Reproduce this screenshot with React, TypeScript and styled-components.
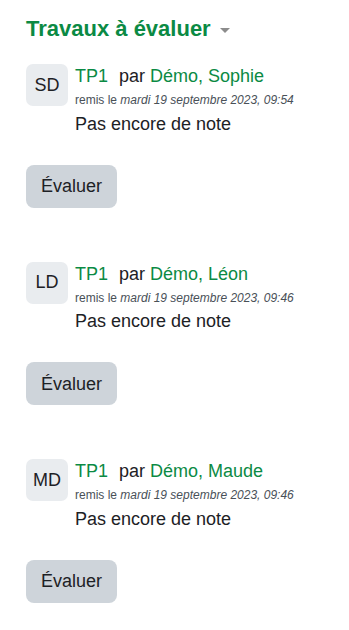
import React from "react";
import styled, { createGlobalStyle } from "styled-components";

const Global = createGlobalStyle`
  html, body { margin: 0; padding: 0; background: #ffffff; }
  body { font-family: "Liberation Sans", Arial, Helvetica, sans-serif; color: #1d2125; }
`;

const Page = styled.div`
  padding: 16px 20px 20px 26px;
`;

const Heading = styled.h3`
  margin: 0 0 22px 0;
  font-size: 22px;
  line-height: 26px;
  font-weight: 700;
  color: #0b8a44;
  display: flex;
  align-items: center;
  gap: 9px;
`;

const Caret = styled.span`
  display: inline-block;
  width: 0;
  height: 0;
  border-left: 5px solid transparent;
  border-right: 5px solid transparent;
  border-top: 5px solid #8c8c8c;
  margin-top: 3px;
`;

const List = styled.div`
  display: flex;
  flex-direction: column;
  gap: 54px;
`;

const Item = styled.div`
  display: flex;
  flex-direction: column;
  gap: 30px;
`;

const Row = styled.div`
  display: flex;
  align-items: flex-start;
  gap: 7px;
`;

const Avatar = styled.div`
  flex: 0 0 auto;
  width: 42px;
  height: 42px;
  border-radius: 7px;
  background: #e9ecef;
  color: #1d2125;
  font-size: 18px;
  display: flex;
  align-items: center;
  justify-content: center;
`;

const Info = styled.div`
  display: flex;
  flex-direction: column;
  padding-top: 1px;
`;

const TitleLine = styled.div`
  font-size: 18px;
  line-height: 22px;
`;

const Link = styled.a`
  color: #0b8a44;
  text-decoration: none;
`;

const Par = styled.span`
  margin-left: 6px;
`;

const DateLine = styled.div`
  margin-top: 5px;
  font-size: 12px;
  line-height: 16px;
  color: #495057;
`;

const Note = styled.div`
  margin-top: 4.5px;
  font-size: 18px;
  line-height: 22px;
`;

const Button = styled.button`
  align-self: flex-start;
  border: none;
  border-radius: 8px;
  background: #ced4da;
  color: #1d2125;
  font-family: inherit;
  font-size: 18px;
  line-height: 22px;
  padding: 10.5px 15px;
  cursor: pointer;
`;

const items = [
  { initials: "SD", name: "Démo, Sophie", time: "09:54" },
  { initials: "LD", name: "Démo, Léon", time: "09:46" },
  { initials: "MD", name: "Démo, Maude", time: "09:46" },
];

export default function App() {
  return (
    <>
      <Global />
      <Page>
        <Heading>
          Travaux à évaluer <Caret />
        </Heading>
        <List>
          {items.map((it) => (
            <Item key={it.initials}>
              <Row>
                <Avatar>{it.initials}</Avatar>
                <Info>
                  <TitleLine>
                    <Link href="#">TP1</Link>{" "}
                    <Par>par</Par> <Link href="#">{it.name}</Link>
                  </TitleLine>
                  <DateLine>
                    remis le <i>mardi 19 septembre 2023, {it.time}</i>
                  </DateLine>
                  <Note>Pas encore de note</Note>
                </Info>
              </Row>
              <Button>Évaluer</Button>
            </Item>
          ))}
        </List>
      </Page>
    </>
  );
}
